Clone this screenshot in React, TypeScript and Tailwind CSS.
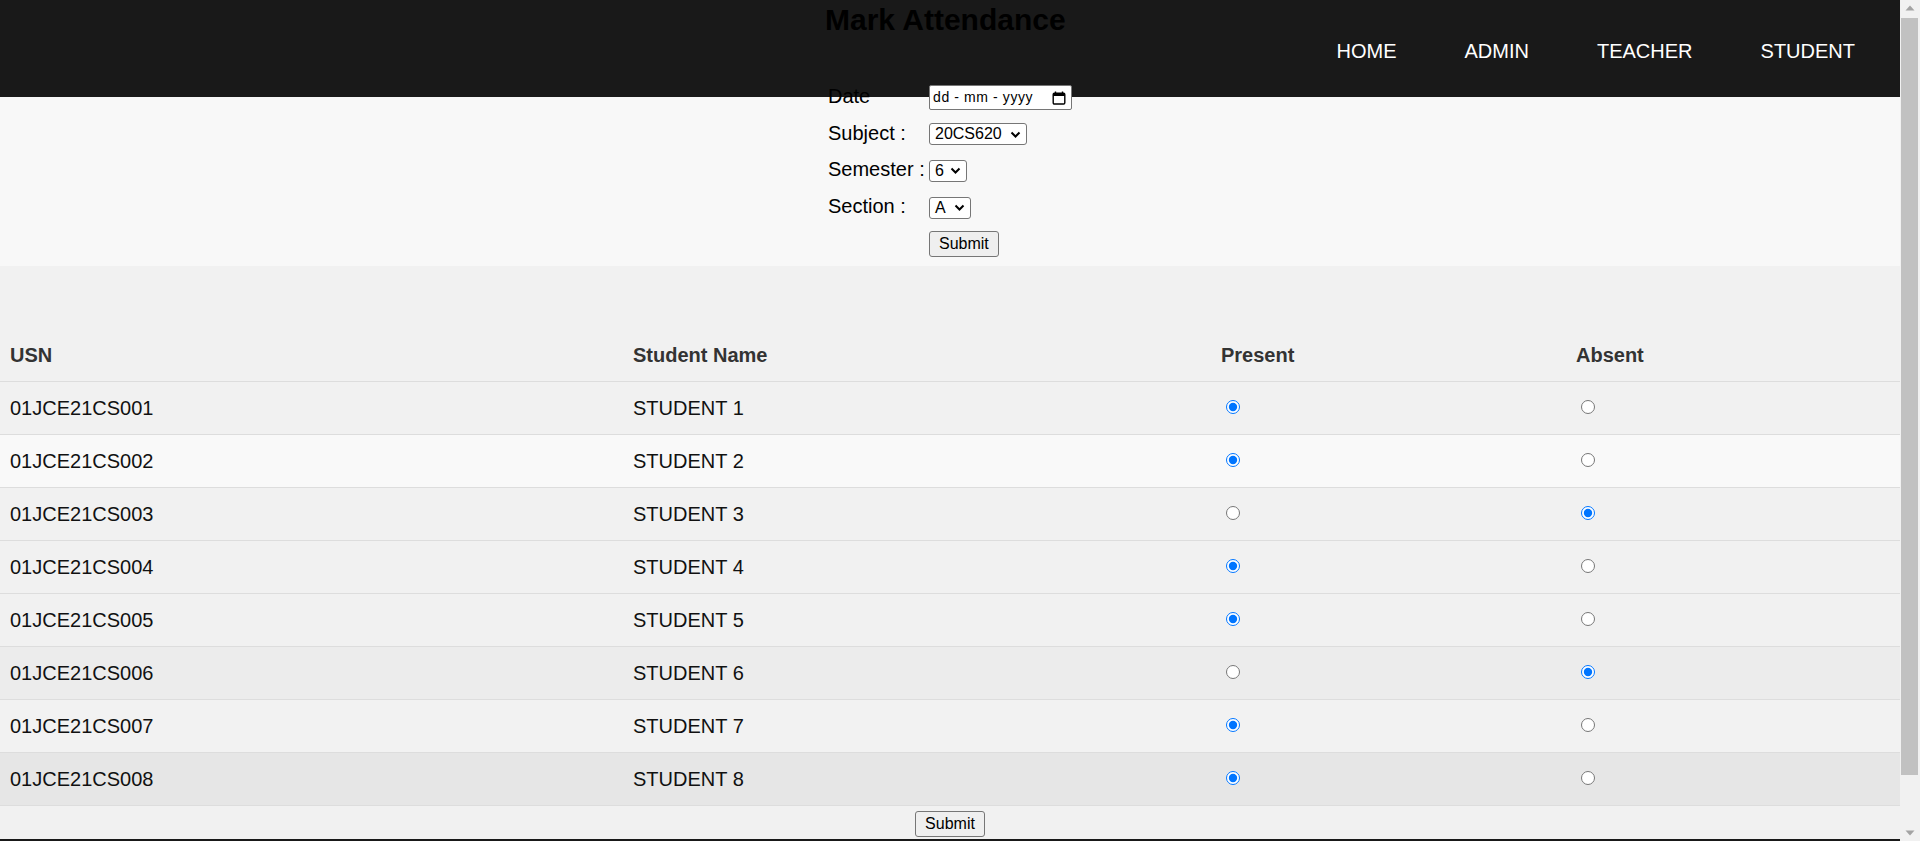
import React from "react";

const students = [
  { usn: "01JCE21CS001", name: "STUDENT 1", present: true, bg: "bg-[#f1f1f1]" },
  { usn: "01JCE21CS002", name: "STUDENT 2", present: true, bg: "bg-[#f9f9f9]" },
  { usn: "01JCE21CS003", name: "STUDENT 3", present: false, bg: "bg-[#f1f1f1]" },
  { usn: "01JCE21CS004", name: "STUDENT 4", present: true, bg: "bg-[#f1f1f1]" },
  { usn: "01JCE21CS005", name: "STUDENT 5", present: true, bg: "bg-[#f1f1f1]" },
  { usn: "01JCE21CS006", name: "STUDENT 6", present: false, bg: "bg-[#ececec]" },
  { usn: "01JCE21CS007", name: "STUDENT 7", present: true, bg: "bg-[#f2f2f2]" },
  { usn: "01JCE21CS008", name: "STUDENT 8", present: true, bg: "bg-[#e6e6e6]" },
];

function Chevron() {
  return (
    <svg width="11" height="7" viewBox="0 0 11 7" aria-hidden>
      <path d="M1.5 1.5l4 4 4-4" fill="none" stroke="#000" strokeWidth="2" />
    </svg>
  );
}

function FakeSelect({ value, className }: { value: string; className: string }) {
  return (
    <div
      className={
        "inline-flex h-[22px] items-center justify-between rounded-[3px] border border-[#767676] bg-white pl-[5px] pr-[5px] text-[16px] leading-none text-black " +
        className
      }
    >
      <span>{value}</span>
      <Chevron />
    </div>
  );
}

function FormRow({ label, children }: { label: string; children: React.ReactNode }) {
  return (
    <div className="flex h-[36.6px] items-center pl-[3px]">
      <span className="mb-[2px] w-[101px] shrink-0 text-[20px] leading-[23px] text-black">{label}</span>
      {children}
    </div>
  );
}

function SubmitButton() {
  return (
    <button className="h-[26px] rounded-[3px] border border-[#767676] bg-[#efefef] px-[9px] text-[16px] leading-none text-black">
      Submit
    </button>
  );
}

function Scrollbar() {
  return (
    <div className="flex w-[20px] shrink-0 flex-col bg-[#f1f1f1]">
      <div className="flex h-[18px] items-start justify-center pt-[5px]">
        <svg width="10" height="6" viewBox="0 0 10 6" aria-hidden>
          <path d="M5 0.5L9.5 5.5H0.5z" fill="#a3a3a3" />
        </svg>
      </div>
      <div className="ml-[1px] h-[757px] w-[17px] bg-[#c1c1c1]" />
      <div className="flex flex-1 items-end justify-center pb-[5px]">
        <svg width="10" height="6" viewBox="0 0 10 6" aria-hidden>
          <path d="M5 5.5L9.5 0.5H0.5z" fill="#a3a3a3" />
        </svg>
      </div>
    </div>
  );
}

export default function App() {
  return (
    <div className="flex h-[841px] overflow-hidden bg-[#f1f1f1] font-['Liberation_Sans',Arial,sans-serif]">
      <main className="flex w-[1900px] shrink-0 flex-col">
        <header className="flex h-[97px] shrink-0 items-center justify-end bg-[#191919] pr-[45px] pt-[4px]">
          <nav className="flex gap-[68px] text-[20px] text-white">
            <a>HOME</a>
            <a>ADMIN</a>
            <a>TEACHER</a>
            <a>STUDENT</a>
          </nav>
        </header>

        <section className="flex h-[169px] shrink-0 flex-col bg-[#f8f8f8]">
          <div className="relative mx-auto -mt-[97px] w-[250px]">
            <h2 className="mt-[3px] h-[34px] text-[30px] font-bold leading-[34px] text-black">Mark Attendance</h2>
            <div className="mt-[42.5px] flex flex-col">
              <FormRow label="Date">
                <div className="flex h-[25px] w-[143px] items-center justify-between rounded-[2px] border border-[#767676] bg-white pl-[3px] pr-[5px] text-[14px] tracking-[0.6px] text-black">
                  <span>dd - mm - yyyy</span>
                  <svg width="14" height="14" viewBox="0 0 14 14" aria-hidden>
                    <path d="M3.5 0.5v2.5M10.5 0.5v2.5" stroke="#000" strokeWidth="1.4" />
                    <rect x="1.2" y="2.2" width="11.6" height="10.8" rx="1.2" fill="none" stroke="#000" strokeWidth="1.4" />
                    <rect x="1.2" y="2.2" width="11.6" height="2.8" fill="#000" />
                  </svg>
                </div>
              </FormRow>
              <FormRow label="Subject :">
                <FakeSelect value="20CS620" className="w-[98px]" />
              </FormRow>
              <FormRow label="Semester :">
                <FakeSelect value="6" className="w-[38px]" />
              </FormRow>
              <FormRow label="Section :">
                <FakeSelect value="A" className="w-[42px]" />
              </FormRow>
              <div className="flex h-[36.6px] items-center pl-[104px]">
                <SubmitButton />
              </div>
            </div>
          </div>
        </section>

        <section className="flex flex-col bg-[#f1f1f1] pt-[63px]">
          <div className="grid h-[53px] grid-cols-[623px_588px_355px_1fr] items-center border-b border-[#dddddd] text-[20px] font-bold text-[#333]">
            <div className="pl-[10px]">USN</div>
            <div className="pl-[10px]">Student Name</div>
            <div className="pl-[10px]">Present</div>
            <div className="pl-[10px]">Absent</div>
          </div>
          {students.map((s, i) => (
            <div
              key={s.usn}
              className={
                "grid h-[53px] grid-cols-[623px_588px_355px_1fr] items-center border-b border-[#dddddd] text-[20px] text-[#111] " +
                s.bg
              }
            >
              <div className="pl-[10px]">{s.usn}</div>
              <div className="pl-[10px]">{s.name}</div>
              <div className="flex items-center pl-[10px]">
                <input type="radio" name={"att" + i} defaultChecked={s.present} className="mb-[2px] ml-[5px] h-[14px] w-[14px]" />
              </div>
              <div className="flex items-center pl-[10px]">
                <input type="radio" name={"att" + i} defaultChecked={!s.present} className="mb-[2px] ml-[5px] h-[14px] w-[14px]" />
              </div>
            </div>
          ))}
          <div className="flex h-[33px] justify-center pt-[5px]">
            <SubmitButton />
          </div>
        </section>

        <footer className="h-[80px] shrink-0 bg-[#191919]" />
      </main>
      <Scrollbar />
    </div>
  );
}
